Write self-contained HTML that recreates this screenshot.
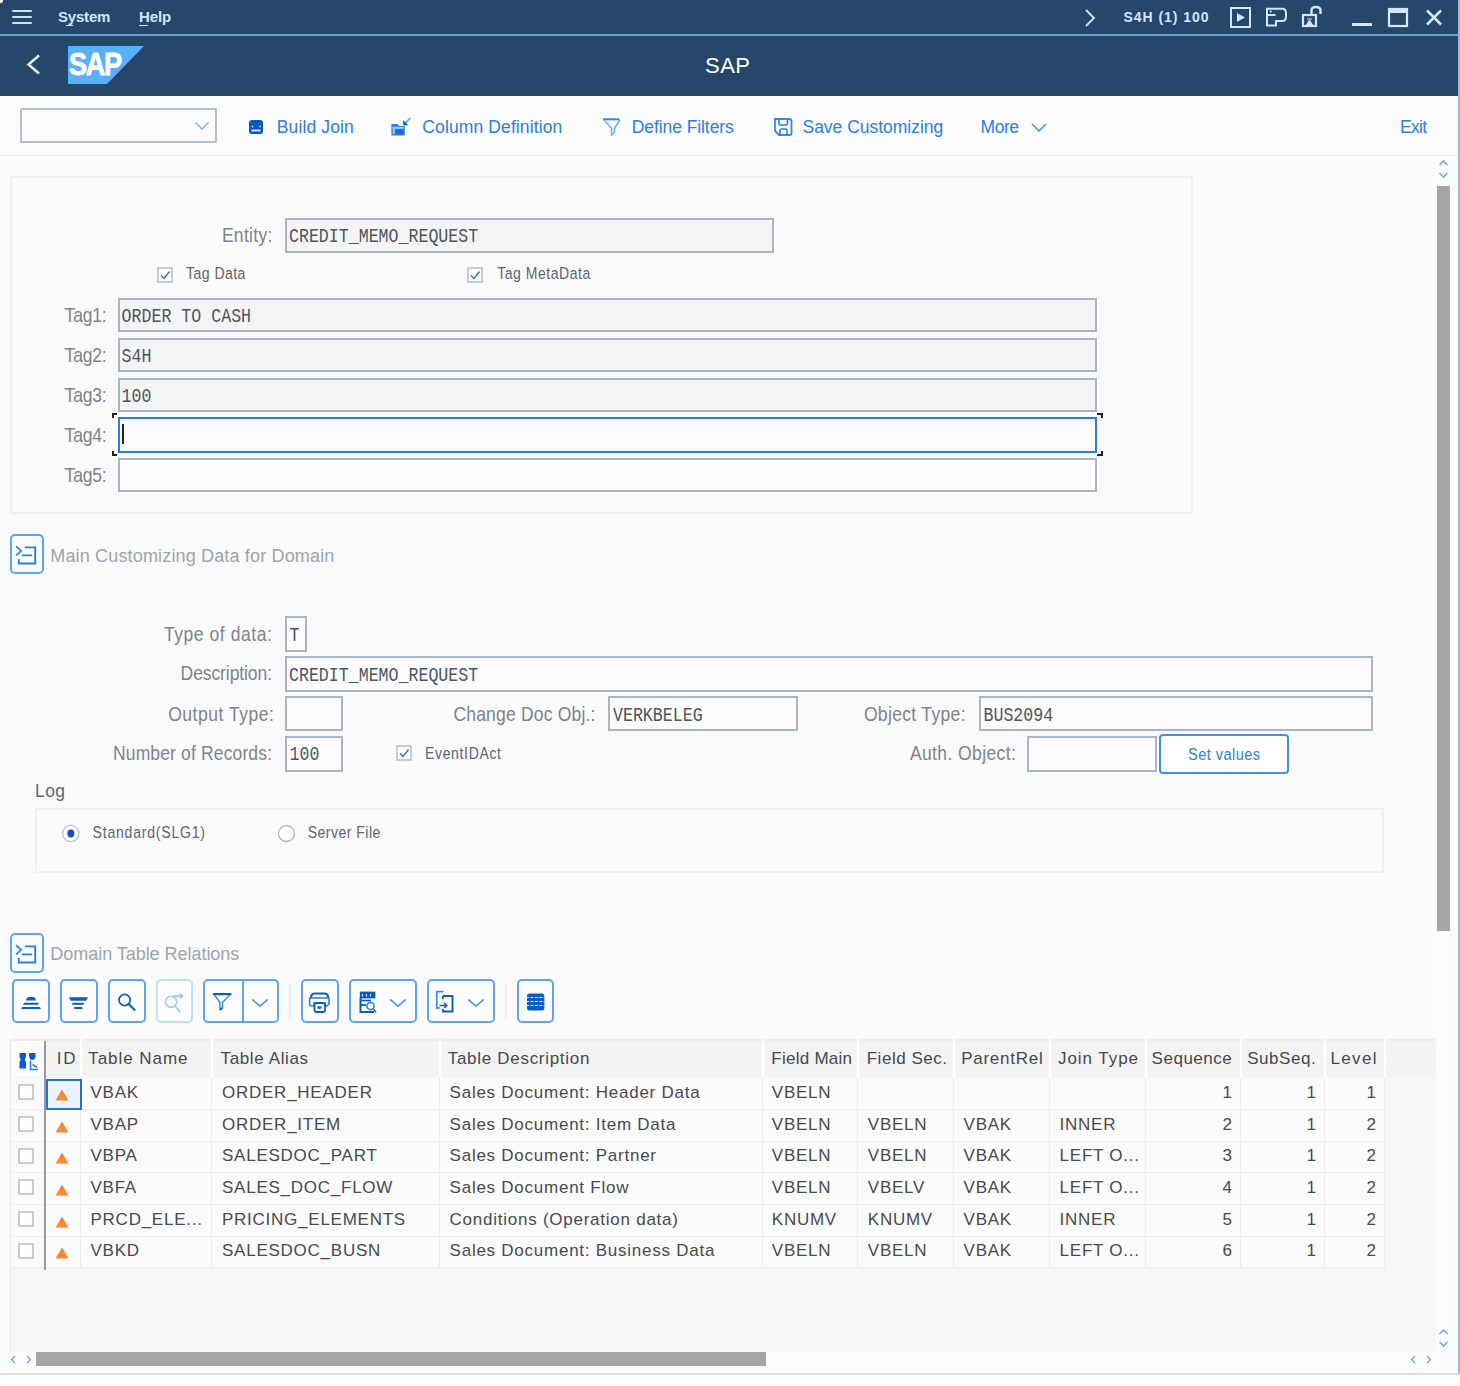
<!DOCTYPE html><html><head><meta charset="utf-8"><style>
html,body{margin:0;padding:0;}
body{width:1460px;height:1386px;position:relative;overflow:hidden;background:#fff;font-family:"Liberation Sans",sans-serif;}
body>div,body>svg{position:absolute;white-space:nowrap;}
</style></head><body>
<div style="left:0px;top:0px;width:1460px;height:96px;background:#25476a;"></div>
<div style="left:0px;top:34px;width:1458px;height:2px;background:#6a9dd6;"></div>
<div style="left:12px;top:10px;width:20px;height:2px;background:#c8e3fe;border-radius:1px;"></div>
<div style="left:12px;top:16px;width:20px;height:2px;background:#c8e3fe;border-radius:1px;"></div>
<div style="left:12px;top:22px;width:20px;height:2px;background:#c8e3fe;border-radius:1px;"></div>
<div style="left:-2px;top:-2px;width:4.5px;height:4.5px;border-radius:50%;background:#ffffff"></div>
<div style="left:58px;top:9.30px;font-size:15px;line-height:15px;color:#d2e6fd;font-family:'Liberation Sans',sans-serif;font-weight:600;letter-spacing:-0.202px;">System</div>
<div style="left:66px;top:25px;width:7px;height:1px;background:#d2e6fd;"></div>
<div style="left:139px;top:9.30px;font-size:15px;line-height:15px;color:#d2e6fd;font-family:'Liberation Sans',sans-serif;font-weight:600;letter-spacing:-0.117px;">Help</div>
<div style="left:139px;top:25px;width:9px;height:1px;background:#d2e6fd;"></div>
<svg style="left:1083px;top:8px" width="14" height="20" viewBox="0 0 14 20"><path d="M3 2 L11 10 L3 18" fill="none" stroke="#d2e6fd" stroke-width="1.8"/></svg>
<div style="left:1123.5px;top:10.15px;font-size:14px;line-height:14px;color:#d2e6fd;font-family:'Liberation Sans',sans-serif;font-weight:600;letter-spacing:0.952px;">S4H (1) 100</div>
<svg style="left:1230px;top:7px" width="22" height="22" viewBox="0 0 22 22"><rect x="1" y="1" width="19" height="19" fill="none" stroke="#d2e6fd" stroke-width="2"/><path d="M7 6 L15 10.5 L7 15Z" fill="#d2e6fd"/></svg>
<svg style="left:1264px;top:6px" width="26" height="23" viewBox="0 0 26 23"><path d="M3 2.8 H18.5 Q22 2.8 22 7.5 V10 Q22 15 18.5 15 H12 V19.5 H3 Z" fill="none" stroke="#d2e6fd" stroke-width="2"/><path d="M3 9 H11.5 M6 6 L7.5 5" fill="none" stroke="#d2e6fd" stroke-width="1.8"/></svg>
<svg style="left:1300px;top:4px" width="25" height="25" viewBox="0 0 25 25"><rect x="3" y="11" width="13" height="11" fill="none" stroke="#d2e6fd" stroke-width="2.2"/><path d="M11.5 11 V6.5 Q11.5 3 16 3 Q20.5 3 20.5 6.5 V10" fill="none" stroke="#d2e6fd" stroke-width="2.4"/><path d="M6.5 21 L9.5 16 L12.5 21 Z M7 15 H12" fill="#d2e6fd" stroke="#d2e6fd" stroke-width="1"/></svg>
<div style="left:1352px;top:23px;width:20px;height:3px;background:#d2e6fd;"></div>
<svg style="left:1387px;top:7px" width="22" height="21" viewBox="0 0 22 21"><rect x="2" y="2" width="18" height="17" fill="none" stroke="#d2e6fd" stroke-width="2.2"/><rect x="2" y="2" width="18" height="4" fill="#d2e6fd"/></svg>
<svg style="left:1425px;top:9px" width="19" height="17" viewBox="0 0 19 17"><path d="M2 1.5 L16 15.5 M16 1.5 L2 15.5" stroke="#d2e6fd" stroke-width="2.5"/></svg>
<svg style="left:25px;top:53px" width="18" height="24" viewBox="0 0 18 24"><path d="M14 2.5 L3.5 11.5 L14 20.5" fill="none" stroke="#eef5ff" stroke-width="2.4"/></svg>
<svg style="left:68px;top:46px" width="77" height="38" viewBox="0 0 77 38"><path d="M0 0 H76 L39 38 H0 Z" fill="#58b0fb"/></svg>
<div style="left:69px;top:48.94px;font-size:31.5px;line-height:31.5px;color:#ffffff;font-family:'Liberation Sans',sans-serif;font-weight:700;letter-spacing:-1.500px;transform:scaleX(0.86);transform-origin:0 0;-webkit-text-stroke:0.8px #ffffff;">SAP</div>
<div style="left:705px;top:55.38px;font-size:22px;line-height:22px;color:#ffffff;font-family:'Liberation Sans',sans-serif;letter-spacing:0.490px;">SAP</div>
<div style="left:1458px;top:0px;width:2px;height:1373px;background:#8fbdee;"></div>
<div style="left:0px;top:96px;width:1458px;height:59px;background:#fbfbfc;"></div>
<div style="left:0px;top:155px;width:1458px;height:1px;background:#ececec;"></div>
<div style="left:20px;top:108px;width:197px;height:35px;background:#fbfbfc;border:2px solid #b3c0cc;box-sizing:border-box;border-radius:1px;"></div>
<svg style="left:194px;top:121px" width="17" height="10" viewBox="0 0 17 10"><path d="M1.5 1.5 L8 8 L14.5 1.5" fill="none" stroke="#7fb2ee" stroke-width="1.5"/></svg>
<svg style="left:248px;top:119px" width="16" height="16" viewBox="0 0 16 16"><rect x="1" y="1" width="14" height="14" rx="3" fill="#0b57b9"/><circle cx="4.5" cy="7.5" r="1" fill="#9cc6ff"/><circle cx="12" cy="7.5" r="1" fill="#9cc6ff"/><rect x="3.5" y="10.5" width="9" height="2" fill="#d4e6ff"/></svg>
<div style="left:276.8px;top:118.99px;font-size:17.5px;line-height:17.5px;color:#2a7fe0;font-family:'Liberation Sans',sans-serif;letter-spacing:0.125px;">Build Join</div>
<svg style="left:386px;top:112px" width="30" height="30" viewBox="0 0 30 30"><path d="M5.4 12 H11.5 L13.5 14 H18.8 V23.4 H5.4 Z" fill="#2a80e0"/><rect x="6.6" y="14.8" width="11" height="2" fill="#a9d2fd"/><rect x="6.6" y="14.8" width="2.2" height="7.3" fill="#8cc2fb"/><rect x="9.5" y="17.5" width="8" height="5" fill="#1b6ad6"/><path d="M24.5 5.8 L19.2 11.2" stroke="#6ab0fa" stroke-width="1.7"/><path d="M17.2 8.3 V13.2 H22.2 Z" fill="#0b57c9"/></svg>
<div style="left:422.3px;top:118.99px;font-size:17.5px;line-height:17.5px;color:#2a7fe0;font-family:'Liberation Sans',sans-serif;letter-spacing:0.117px;">Column Definition</div>
<svg style="left:601px;top:117px" width="20" height="19" viewBox="0 0 20 19"><path d="M2 2.3 H18.5" stroke="#2b85e6" stroke-width="2"/><path d="M3 3 L10.5 11 V18 L13.5 15 V11 L19 3" fill="none" stroke="#6ab0fa" stroke-width="1.6"/></svg>
<div style="left:631.8px;top:118.99px;font-size:17.5px;line-height:17.5px;color:#2a7fe0;font-family:'Liberation Sans',sans-serif;letter-spacing:-0.084px;">Define Filters</div>
<svg style="left:773px;top:117px" width="20" height="20" viewBox="0 0 20 20"><path d="M2 2 H16 Q18.5 2 18.5 4.5 V16.5 Q18.5 18 16.5 18 H6 L2 14 Z" fill="none" stroke="#3388ea" stroke-width="1.8"/><path d="M6 2 V6.5 Q6 8 7.5 8 H13 Q14.5 8 14.5 6.5 V2" fill="none" stroke="#2a7ee0" stroke-width="1.6"/><path d="M7 18 V14 Q7 12 9 12 H12.5 Q14 12 14 14 V18" fill="none" stroke="#2a7ee0" stroke-width="1.6"/></svg>
<div style="left:802.5px;top:118.99px;font-size:17.5px;line-height:17.5px;color:#2a7fe0;font-family:'Liberation Sans',sans-serif;letter-spacing:-0.022px;">Save Customizing</div>
<div style="left:980.5px;top:118.99px;font-size:17.5px;line-height:17.5px;color:#2a7fe0;font-family:'Liberation Sans',sans-serif;letter-spacing:-0.424px;">More</div>
<svg style="left:1030px;top:122px" width="18" height="11" viewBox="0 0 18 11"><path d="M2 2 L9 9 L16 2" fill="none" stroke="#4a98f0" stroke-width="1.6"/></svg>
<div style="left:1400px;top:118.99px;font-size:17.5px;line-height:17.5px;color:#2a7fe0;font-family:'Liberation Sans',sans-serif;letter-spacing:-0.724px;">Exit</div>
<div style="left:0px;top:156px;width:1458px;height:1217px;background:#fafafa;"></div>
<div style="left:0px;top:1373px;width:1460px;height:2px;background:#dedede;"></div>
<div style="left:0px;top:1375px;width:1460px;height:11px;background:#ffffff;"></div>
<div style="left:1436px;top:156px;width:15px;height:1196px;background:#fbfbfb;"></div>
<svg style="left:1438px;top:158px" width="11" height="9" viewBox="0 0 11 9"><path d="M1.5 7 L5.5 3 L9.5 7" fill="none" stroke="#6d9de6" stroke-width="1.25"/></svg>
<svg style="left:1438px;top:171px" width="11" height="9" viewBox="0 0 11 9"><path d="M1.5 2 L5.5 6 L9.5 2" fill="none" stroke="#6d9de6" stroke-width="1.25"/></svg>
<div style="left:1437px;top:186px;width:13px;height:745px;background:#a6a6a6;"></div>
<svg style="left:1438px;top:1327px" width="11" height="9" viewBox="0 0 11 9"><path d="M1.5 7 L5.5 3 L9.5 7" fill="none" stroke="#6d9de6" stroke-width="1.25"/></svg>
<svg style="left:1438px;top:1340px" width="11" height="9" viewBox="0 0 11 9"><path d="M1.5 2 L5.5 6 L9.5 2" fill="none" stroke="#6d9de6" stroke-width="1.25"/></svg>
<div style="left:10px;top:176px;width:1183px;height:338px;border:2px solid #efefef;box-sizing:border-box;"></div>
<div style="left:221.9px;top:228.19px;font-size:17.5px;line-height:17.5px;color:#7b848d;font-family:'Liberation Sans',sans-serif;letter-spacing:0.295px;transform:scaleY(1.15);transform-origin:0 14.81px;">Entity:</div>
<div style="left:285px;top:218px;width:489px;height:35px;background:#f4f4f4;border:2px solid #a8b6c4;box-sizing:border-box;"></div>
<div style="left:289px;top:230.28px;font-size:16.6px;line-height:16.6px;color:#4e555d;font-family:'Liberation Mono',monospace;transform:scaleY(1.17);transform-origin:0 12.72px;">CREDIT_MEMO_REQUEST</div>
<svg style="left:157px;top:267px" width="16" height="16" viewBox="0 0 16 16"><rect x="1" y="1" width="14" height="14" fill="#fcfcfc" stroke="#aab4bf" stroke-width="1.3"/><path d="M4 8.5 L7 11.5 L12.5 4.5" fill="none" stroke="#2f6fd0" stroke-width="1.4"/></svg>
<div style="left:186px;top:267.35px;font-size:14px;line-height:14px;color:#5b6570;font-family:'Liberation Sans',sans-serif;letter-spacing:0.481px;transform:scaleY(1.18);transform-origin:0 11.85px;">Tag Data</div>
<svg style="left:467px;top:267px" width="16" height="16" viewBox="0 0 16 16"><rect x="1" y="1" width="14" height="14" fill="#fcfcfc" stroke="#aab4bf" stroke-width="1.3"/><path d="M4 8.5 L7 11.5 L12.5 4.5" fill="none" stroke="#2f6fd0" stroke-width="1.4"/></svg>
<div style="left:497.2px;top:267.35px;font-size:14px;line-height:14px;color:#5b6570;font-family:'Liberation Sans',sans-serif;letter-spacing:0.531px;transform:scaleY(1.18);transform-origin:0 11.85px;">Tag MetaData</div>
<div style="left:64.6px;top:307.69px;font-size:17.5px;line-height:17.5px;color:#7b848d;font-family:'Liberation Sans',sans-serif;letter-spacing:-0.203px;transform:scaleY(1.15);transform-origin:0 14.81px;">Tag1:</div>
<div style="left:118px;top:298px;width:979px;height:34px;background:#f4f4f4;border:2px solid #a8b6c4;box-sizing:border-box;"></div>
<div style="left:121.6px;top:309.78px;font-size:16.6px;line-height:16.6px;color:#4e555d;font-family:'Liberation Mono',monospace;transform:scaleY(1.17);transform-origin:0 12.72px;">ORDER TO CASH</div>
<div style="left:64.6px;top:347.69px;font-size:17.5px;line-height:17.5px;color:#7b848d;font-family:'Liberation Sans',sans-serif;letter-spacing:-0.203px;transform:scaleY(1.15);transform-origin:0 14.81px;">Tag2:</div>
<div style="left:118px;top:338px;width:979px;height:34px;background:#f4f4f4;border:2px solid #a8b6c4;box-sizing:border-box;"></div>
<div style="left:121.6px;top:349.78px;font-size:16.6px;line-height:16.6px;color:#4e555d;font-family:'Liberation Mono',monospace;transform:scaleY(1.17);transform-origin:0 12.72px;">S4H</div>
<div style="left:64.6px;top:387.69px;font-size:17.5px;line-height:17.5px;color:#7b848d;font-family:'Liberation Sans',sans-serif;letter-spacing:-0.203px;transform:scaleY(1.15);transform-origin:0 14.81px;">Tag3:</div>
<div style="left:118px;top:378px;width:979px;height:34px;background:#f4f4f4;border:2px solid #a8b6c4;box-sizing:border-box;"></div>
<div style="left:121.6px;top:389.78px;font-size:16.6px;line-height:16.6px;color:#4e555d;font-family:'Liberation Mono',monospace;transform:scaleY(1.17);transform-origin:0 12.72px;">100</div>
<div style="left:64.6px;top:427.69px;font-size:17.5px;line-height:17.5px;color:#7b848d;font-family:'Liberation Sans',sans-serif;letter-spacing:-0.203px;transform:scaleY(1.15);transform-origin:0 14.81px;">Tag4:</div>
<div style="left:118px;top:417px;width:979px;height:36px;background:#fbfbfb;border:2px solid #2a7ce8;box-sizing:border-box;"></div>
<div style="left:64.6px;top:467.69px;font-size:17.5px;line-height:17.5px;color:#7b848d;font-family:'Liberation Sans',sans-serif;letter-spacing:-0.203px;transform:scaleY(1.15);transform-origin:0 14.81px;">Tag5:</div>
<div style="left:118px;top:458px;width:979px;height:34px;background:#fbfbfb;border:2px solid #a8b6c4;box-sizing:border-box;"></div>
<div style="left:112px;top:413px;width:5px;height:5px;border-left:2px solid #222;border-top:2px solid #222;box-sizing:border-box"></div>
<div style="left:112px;top:451px;width:5px;height:5px;border-left:2px solid #222;border-bottom:2px solid #222;box-sizing:border-box"></div>
<div style="left:1097px;top:413px;width:6px;height:5px;border-right:2px solid #222;border-top:2px solid #222;box-sizing:border-box"></div>
<div style="left:1097px;top:451px;width:6px;height:5px;border-right:2px solid #222;border-bottom:2px solid #222;box-sizing:border-box"></div>
<div style="left:122px;top:424px;width:2px;height:20px;background:#222;"></div>
<div style="left:10px;top:534px;width:34px;height:40px;border:2px solid #5ea4f2;box-sizing:border-box;border-radius:5px;"></div>
<svg style="left:10px;top:534px" width="34" height="40" viewBox="0 0 34 40"><path d="M6.5 12.8 L11.2 16.8 L6.5 21" fill="none" stroke="#3d8ce8" stroke-width="1.8" stroke-linecap="round"/><path d="M14.8 13.4 H25.2 V29.5 H8.8 V25" fill="none" stroke="#2a7fe0" stroke-width="1.9"/><path d="M12.7 21.4 H21.4" stroke="#2a7fe0" stroke-width="1.9" stroke-linecap="round"/></svg>
<div style="left:50.3px;top:547.46px;font-size:18px;line-height:18px;color:#9aa5b0;font-family:'Liberation Sans',sans-serif;letter-spacing:0.158px;">Main Customizing Data for Domain</div>
<div style="left:163.9px;top:626.79px;font-size:17.5px;line-height:17.5px;color:#7b848d;font-family:'Liberation Sans',sans-serif;letter-spacing:0.568px;transform:scaleY(1.15);transform-origin:0 14.81px;">Type of data:</div>
<div style="left:285px;top:616px;width:22px;height:36px;background:#fbfbfb;border:2px solid #a8b6c4;box-sizing:border-box;"></div>
<div style="left:289.5px;top:628.88px;font-size:16.6px;line-height:16.6px;color:#4e555d;font-family:'Liberation Mono',monospace;transform:scaleY(1.17);transform-origin:0 12.72px;">T</div>
<div style="left:180.6px;top:666.49px;font-size:17.5px;line-height:17.5px;color:#7b848d;font-family:'Liberation Sans',sans-serif;letter-spacing:-0.091px;transform:scaleY(1.15);transform-origin:0 14.81px;">Description:</div>
<div style="left:285px;top:656px;width:1088px;height:36px;background:#fbfbfb;border:2px solid #a8b6c4;box-sizing:border-box;"></div>
<div style="left:289px;top:668.58px;font-size:16.6px;line-height:16.6px;color:#4e555d;font-family:'Liberation Mono',monospace;transform:scaleY(1.17);transform-origin:0 12.72px;">CREDIT_MEMO_REQUEST</div>
<div style="left:168.2px;top:706.79px;font-size:17.5px;line-height:17.5px;color:#7b848d;font-family:'Liberation Sans',sans-serif;letter-spacing:0.538px;transform:scaleY(1.15);transform-origin:0 14.81px;">Output Type:</div>
<div style="left:285px;top:696px;width:58px;height:35px;background:#fbfbfb;border:2px solid #a8b6c4;box-sizing:border-box;"></div>
<div style="left:453.4px;top:706.69px;font-size:17.5px;line-height:17.5px;color:#7b848d;font-family:'Liberation Sans',sans-serif;letter-spacing:0.193px;transform:scaleY(1.15);transform-origin:0 14.81px;">Change Doc Obj.:</div>
<div style="left:608px;top:696px;width:190px;height:35px;background:#fbfbfb;border:2px solid #a8b6c4;box-sizing:border-box;"></div>
<div style="left:613px;top:708.78px;font-size:16.6px;line-height:16.6px;color:#4e555d;font-family:'Liberation Mono',monospace;transform:scaleY(1.17);transform-origin:0 12.72px;">VERKBELEG</div>
<div style="left:863.9px;top:706.69px;font-size:17.5px;line-height:17.5px;color:#7b848d;font-family:'Liberation Sans',sans-serif;letter-spacing:0.334px;transform:scaleY(1.15);transform-origin:0 14.81px;">Object Type:</div>
<div style="left:979px;top:696px;width:394px;height:35px;background:#fbfbfb;border:2px solid #a8b6c4;box-sizing:border-box;"></div>
<div style="left:983.5px;top:708.78px;font-size:16.6px;line-height:16.6px;color:#4e555d;font-family:'Liberation Mono',monospace;transform:scaleY(1.17);transform-origin:0 12.72px;">BUS2094</div>
<div style="left:113px;top:746.19px;font-size:17.5px;line-height:17.5px;color:#7b848d;font-family:'Liberation Sans',sans-serif;letter-spacing:0.142px;transform:scaleY(1.15);transform-origin:0 14.81px;">Number of Records:</div>
<div style="left:285px;top:736px;width:58px;height:36px;background:#fbfbfb;border:2px solid #a8b6c4;box-sizing:border-box;"></div>
<div style="left:289.5px;top:748.28px;font-size:16.6px;line-height:16.6px;color:#4e555d;font-family:'Liberation Mono',monospace;transform:scaleY(1.17);transform-origin:0 12.72px;">100</div>
<svg style="left:396px;top:745px" width="16" height="16" viewBox="0 0 16 16"><rect x="1" y="1" width="14" height="14" fill="#fcfcfc" stroke="#aab4bf" stroke-width="1.3"/><path d="M4 8.5 L7 11.5 L12.5 4.5" fill="none" stroke="#2f6fd0" stroke-width="1.4"/></svg>
<div style="left:425px;top:746.65px;font-size:14px;line-height:14px;color:#5b6570;font-family:'Liberation Sans',sans-serif;letter-spacing:0.664px;transform:scaleY(1.18);transform-origin:0 11.85px;">EventIDAct</div>
<div style="left:909.9px;top:746.19px;font-size:17.5px;line-height:17.5px;color:#7b848d;font-family:'Liberation Sans',sans-serif;letter-spacing:0.403px;transform:scaleY(1.15);transform-origin:0 14.81px;">Auth. Object:</div>
<div style="left:1027px;top:736px;width:130px;height:36px;background:#fbfbfb;border:2px solid #a8b6c4;box-sizing:border-box;"></div>
<div style="left:1159px;top:734px;width:130px;height:40px;background:#ffffff;border:2px solid #3f8ee8;box-sizing:border-box;border-radius:4px;"></div>
<div style="left:1188px;top:747.73px;font-size:14.5px;line-height:14.5px;color:#2a7fe0;font-family:'Liberation Sans',sans-serif;letter-spacing:0.477px;transform:scaleY(1.1);transform-origin:0 12.27px;">Set values</div>
<div style="left:35px;top:783.49px;font-size:17.5px;line-height:17.5px;color:#5e6872;font-family:'Liberation Sans',sans-serif;letter-spacing:0.401px;">Log</div>
<div style="left:35px;top:808px;width:1349px;height:65px;border:2px solid #efefef;box-sizing:border-box;"></div>
<svg style="left:61px;top:824px" width="19" height="19" viewBox="0 0 19 19"><circle cx="9.8" cy="9.4" r="8.2" fill="#fcfcfc" stroke="#b9c3d0" stroke-width="1.3"/><ellipse cx="9.8" cy="9.4" rx="3.5" ry="4" fill="#0b50c0"/></svg>
<div style="left:92.6px;top:826.15px;font-size:14px;line-height:14px;color:#5b6570;font-family:'Liberation Sans',sans-serif;letter-spacing:0.804px;transform:scaleY(1.18);transform-origin:0 11.85px;">Standard(SLG1)</div>
<svg style="left:277px;top:824px" width="19" height="19" viewBox="0 0 19 19"><circle cx="9.5" cy="9.5" r="8" fill="#fcfcfc" stroke="#aab4bf" stroke-width="1.3"/></svg>
<div style="left:307.7px;top:826.15px;font-size:14px;line-height:14px;color:#5b6570;font-family:'Liberation Sans',sans-serif;letter-spacing:0.492px;transform:scaleY(1.18);transform-origin:0 11.85px;">Server File</div>
<div style="left:10px;top:933px;width:34px;height:40px;border:2px solid #5ea4f2;box-sizing:border-box;border-radius:5px;"></div>
<svg style="left:10px;top:933px" width="34" height="40" viewBox="0 0 34 40"><path d="M6.5 12.8 L11.2 16.8 L6.5 21" fill="none" stroke="#3d8ce8" stroke-width="1.8" stroke-linecap="round"/><path d="M14.8 13.4 H25.2 V29.5 H8.8 V25" fill="none" stroke="#2a7fe0" stroke-width="1.9"/><path d="M12.7 21.4 H21.4" stroke="#2a7fe0" stroke-width="1.9" stroke-linecap="round"/></svg>
<div style="left:50.3px;top:945.46px;font-size:18px;line-height:18px;color:#9aa5b0;font-family:'Liberation Sans',sans-serif;letter-spacing:-0.037px;">Domain Table Relations</div>
<div style="left:12px;top:979px;width:38px;height:44px;background:#fcfcfd;border:2px solid #5ea4f2;box-sizing:border-box;border-radius:5px;"></div>
<div style="left:60px;top:979px;width:38px;height:44px;background:#fcfcfd;border:2px solid #5ea4f2;box-sizing:border-box;border-radius:5px;"></div>
<div style="left:108px;top:979px;width:38px;height:44px;background:#fcfcfd;border:2px solid #5ea4f2;box-sizing:border-box;border-radius:5px;"></div>
<div style="left:156px;top:979px;width:37px;height:44px;background:#fcfcfd;border:2px solid #c0dcfb;box-sizing:border-box;border-radius:5px;"></div>
<div style="left:203px;top:979px;width:76px;height:44px;background:#fcfcfd;border:2px solid #5ea4f2;box-sizing:border-box;border-radius:5px;"></div>
<div style="left:241.5px;top:980px;width:2.0px;height:42px;background:#5ea4f2;"></div>
<div style="left:289px;top:984px;width:2px;height:35px;background:#ececec;"></div>
<div style="left:301px;top:979px;width:38px;height:44px;background:#fcfcfd;border:2px solid #5ea4f2;box-sizing:border-box;border-radius:5px;"></div>
<div style="left:349px;top:979px;width:68px;height:44px;background:#fcfcfd;border:2px solid #5ea4f2;box-sizing:border-box;border-radius:5px;"></div>
<div style="left:427px;top:979px;width:68px;height:44px;background:#fcfcfd;border:2px solid #5ea4f2;box-sizing:border-box;border-radius:5px;"></div>
<div style="left:505px;top:984px;width:2px;height:35px;background:#ececec;"></div>
<div style="left:517px;top:979px;width:37px;height:44px;background:#fcfcfd;border:2px solid #5ea4f2;box-sizing:border-box;border-radius:5px;"></div>
<svg style="left:12px;top:979px" width="38" height="44" viewBox="0 0 38 44"><path d="M14 21.5 Q14.5 18 17 18 H21 Q23.5 18 24 21.5 Z" fill="#0b5cc4"/><path d="M12 23.8 H26 L26.8 25.8 H11.2 Z" fill="#0b5cc4"/><path d="M10 28 H28 L28.8 30 H9.2 Z" fill="#0b5cc4"/></svg>
<svg style="left:60px;top:979px" width="38" height="44" viewBox="0 0 38 44"><path d="M9 18.2 H28 L26.2 21.7 H10.8 Z" fill="#0b5cc4"/><rect x="12.3" y="23.8" width="11.5" height="2" fill="#0b5cc4"/><rect x="14.2" y="28" width="8.2" height="2" fill="#0b5cc4"/></svg>
<svg style="left:108px;top:979px" width="38" height="44" viewBox="0 0 38 44"><circle cx="16.6" cy="21" r="5.6" fill="none" stroke="#0b5cc4" stroke-width="1.7"/><path d="M20.6 25 L26.5 30.8" stroke="#0b5cc4" stroke-width="2.2" stroke-linecap="round"/></svg>
<svg style="left:156px;top:979px" width="37" height="44" viewBox="0 0 37 44"><circle cx="15.1" cy="22.8" r="5.6" fill="none" stroke="#9ccaf7" stroke-width="1.6"/><path d="M19 26.8 L23.7 32.5" stroke="#9ccaf7" stroke-width="1.8" stroke-linecap="round"/><path d="M17 17 H26 M24 15 L26.5 17 L24 19" fill="none" stroke="#8cc0f5" stroke-width="1.5"/></svg>
<svg style="left:203px;top:979px" width="40" height="44" viewBox="0 0 40 44"><path d="M10.8 15.2 H27.5" stroke="#0b5cc4" stroke-width="2.2" stroke-linecap="round"/><path d="M11.5 16 L17 23.5 V30.5 L19.5 29 V23.5 L26.8 16" fill="none" stroke="#3f8ae6" stroke-width="1.5"/><circle cx="18" cy="30" r="1.2" fill="#0b5cc4"/></svg>
<svg style="left:243px;top:979px" width="36" height="44" viewBox="0 0 36 44"><path d="M9.1 20.4 L17 27.2 L24.9 20.4" fill="none" stroke="#4d95ea" stroke-width="1.6"/></svg>
<svg style="left:301px;top:979px" width="38" height="44" viewBox="0 0 38 44"><path d="M10 19 Q10 14.5 14 14.5 H23 Q27 14.5 27 18 V19" fill="none" stroke="#0b5cc4" stroke-width="2.2"/><path d="M8.8 19 H28 V25 L26 27 H24 V24 H13 V27 H10.5 Q8.5 27 8.5 25 Z" fill="none" stroke="#2f7fe0" stroke-width="1.6"/><rect x="13.5" y="24" width="10.5" height="9" rx="1.5" fill="none" stroke="#0b5cc4" stroke-width="1.8"/><ellipse cx="18.5" cy="28.6" rx="2.3" ry="1.3" fill="#0b5cc4"/></svg>
<svg style="left:349px;top:979px" width="40" height="44" viewBox="0 0 40 44"><rect x="10.8" y="12.6" width="15.6" height="6.8" fill="#0b5cc4"/><path d="M13.5 15 V17.5 M17.5 15 V17.5 M21.5 15 V17.5" stroke="#cfe3fb" stroke-width="1"/><path d="M11.5 19 V33 H25" fill="none" stroke="#0b5cc4" stroke-width="2"/><path d="M12 21.5 H22" stroke="#0b5cc4" stroke-width="1.6"/><circle cx="21.5" cy="27" r="3.6" fill="none" stroke="#2f7fe0" stroke-width="1.6"/><path d="M11.5 26 H17" stroke="#0b5cc4" stroke-width="1.8"/><path d="M24.5 30 L27 33.5" stroke="#0b5cc4" stroke-width="1.3"/></svg>
<svg style="left:381px;top:979px" width="36" height="44" viewBox="0 0 36 44"><path d="M9.1 20.4 L17 27.2 L24.9 20.4" fill="none" stroke="#4d95ea" stroke-width="1.6"/></svg>
<svg style="left:427px;top:979px" width="40" height="44" viewBox="0 0 40 44"><path d="M16.5 12.7 H9.8 V29 H12.5" fill="none" stroke="#3f8ae6" stroke-width="1.8"/><path d="M16 17 H25.5 V32.5 H16 V30" fill="none" stroke="#0b5cc4" stroke-width="1.9"/><path d="M15.8 17 V20" stroke="#0b5cc4" stroke-width="1.9"/><path d="M12.5 26.5 H19.5 M17.2 24 L19.8 26.5 L17.2 29" fill="none" stroke="#0b5cc4" stroke-width="1.6"/></svg>
<svg style="left:459px;top:979px" width="36" height="44" viewBox="0 0 36 44"><path d="M9.1 20.4 L17 27.2 L24.9 20.4" fill="none" stroke="#4d95ea" stroke-width="1.6"/></svg>
<svg style="left:517px;top:979px" width="37" height="44" viewBox="0 0 37 44"><rect x="10" y="14.5" width="17.4" height="17" rx="2.5" fill="#0b5cc4"/><path d="M9 18.5 H28.5 M9 22.5 H28.5 M9 26.5 H28.5" stroke="#dbe9fb" stroke-width="1.2" stroke-dasharray="3 1.4"/></svg>
<div style="left:11px;top:1038px;width:1425px;height:314px;background:#f6f6f6;"></div>
<div style="left:10px;top:1039px;width:1px;height:313px;background:#e6e6e6;"></div>
<div style="left:11px;top:1039px;width:1424px;height:38px;background:#f3f3f3;"></div>
<div style="left:11px;top:1040px;width:34px;height:37px;background:#fbfbfb;"></div>
<div style="left:11px;top:1039px;width:1424px;height:2px;background:#ececec;"></div>
<div style="left:56.7px;top:1049.61px;font-size:17px;line-height:17px;color:#45494e;font-family:'Liberation Sans',sans-serif;letter-spacing:1.900px;">ID</div>
<div style="left:88.2px;top:1049.61px;font-size:17px;line-height:17px;color:#45494e;font-family:'Liberation Sans',sans-serif;letter-spacing:0.954px;">Table Name</div>
<div style="left:220.5px;top:1049.61px;font-size:17px;line-height:17px;color:#45494e;font-family:'Liberation Sans',sans-serif;letter-spacing:0.633px;">Table Alias</div>
<div style="left:447.7px;top:1049.61px;font-size:17px;line-height:17px;color:#45494e;font-family:'Liberation Sans',sans-serif;letter-spacing:0.706px;">Table Description</div>
<div style="left:771.3px;top:1049.61px;font-size:17px;line-height:17px;color:#45494e;font-family:'Liberation Sans',sans-serif;letter-spacing:0.254px;">Field Main</div>
<div style="left:866.7px;top:1049.61px;font-size:17px;line-height:17px;color:#45494e;font-family:'Liberation Sans',sans-serif;letter-spacing:0.524px;">Field Sec.</div>
<div style="left:961.2px;top:1049.61px;font-size:17px;line-height:17px;color:#45494e;font-family:'Liberation Sans',sans-serif;letter-spacing:0.738px;">ParentRel</div>
<div style="left:1058px;top:1049.61px;font-size:17px;line-height:17px;color:#45494e;font-family:'Liberation Sans',sans-serif;letter-spacing:0.943px;">Join Type</div>
<div style="left:1151.6px;top:1049.61px;font-size:17px;line-height:17px;color:#45494e;font-family:'Liberation Sans',sans-serif;letter-spacing:0.519px;">Sequence</div>
<div style="left:1247.2px;top:1049.61px;font-size:17px;line-height:17px;color:#45494e;font-family:'Liberation Sans',sans-serif;letter-spacing:0.547px;">SubSeq.</div>
<div style="left:1330.4px;top:1049.61px;font-size:17px;line-height:17px;color:#45494e;font-family:'Liberation Sans',sans-serif;letter-spacing:1.390px;">Level</div>
<div style="left:80px;top:1039px;width:2px;height:38px;background:#ffffff;"></div>
<div style="left:211px;top:1039px;width:2px;height:38px;background:#ffffff;"></div>
<div style="left:439px;top:1039px;width:2px;height:38px;background:#ffffff;"></div>
<div style="left:762px;top:1039px;width:2px;height:38px;background:#ffffff;"></div>
<div style="left:857px;top:1039px;width:2px;height:38px;background:#ffffff;"></div>
<div style="left:953px;top:1039px;width:2px;height:38px;background:#ffffff;"></div>
<div style="left:1049px;top:1039px;width:2px;height:38px;background:#ffffff;"></div>
<div style="left:1145px;top:1039px;width:2px;height:38px;background:#ffffff;"></div>
<div style="left:1240px;top:1039px;width:2px;height:38px;background:#ffffff;"></div>
<div style="left:1324px;top:1039px;width:2px;height:38px;background:#ffffff;"></div>
<div style="left:1384px;top:1039px;width:2px;height:38px;background:#ffffff;"></div>
<svg style="left:17px;top:1050px" width="24" height="24" viewBox="0 0 24 24"><path d="M2.5 3 H9 V7 L7.8 9.5 L9 12 V18.5 H2.5 V12 L3.7 9.5 L2.5 7 Z" fill="#0b5cc4"/><path d="M12 3 H18.5 V7 L17 9.8 H13.5 L12 7 Z" fill="#0b5cc4"/><path d="M13.5 10.5 V19.5 H21 M15.5 14.5 L20 17.5" fill="none" stroke="#2f7fe0" stroke-width="1.6"/></svg>
<div style="left:11px;top:1078px;width:1374px;height:32px;background:#fafafa;"></div>
<div style="left:11px;top:1109px;width:1374px;height:1px;background:#ececec;"></div>
<div style="left:80px;top:1078px;width:1px;height:32px;background:#ececec;"></div>
<div style="left:211px;top:1078px;width:1px;height:32px;background:#ececec;"></div>
<div style="left:439px;top:1078px;width:1px;height:32px;background:#ececec;"></div>
<div style="left:762px;top:1078px;width:1px;height:32px;background:#ececec;"></div>
<div style="left:857px;top:1078px;width:1px;height:32px;background:#ececec;"></div>
<div style="left:953px;top:1078px;width:1px;height:32px;background:#ececec;"></div>
<div style="left:1049px;top:1078px;width:1px;height:32px;background:#ececec;"></div>
<div style="left:1145px;top:1078px;width:1px;height:32px;background:#ececec;"></div>
<div style="left:1240px;top:1078px;width:1px;height:32px;background:#ececec;"></div>
<div style="left:1324px;top:1078px;width:1px;height:32px;background:#ececec;"></div>
<div style="left:1384px;top:1078px;width:1px;height:32px;background:#ececec;"></div>
<svg style="left:18px;top:1084px" width="16" height="16" viewBox="0 0 16 16"><rect x="1" y="1" width="14" height="14" fill="#fcfcfc" stroke="#aab4bf" stroke-width="1.3"/></svg>
<svg style="left:54px;top:1088px" width="16" height="14" viewBox="0 0 16 14"><path d="M8 1.5 L14.5 12.5 H1.5 Z" fill="#f58b2e"/></svg>
<div style="left:90.5px;top:1084.11px;font-size:17px;line-height:17px;color:#474b50;font-family:'Liberation Sans',sans-serif;letter-spacing:0.750px;">VBAK</div>
<div style="left:222px;top:1084.11px;font-size:17px;line-height:17px;color:#474b50;font-family:'Liberation Sans',sans-serif;letter-spacing:0.750px;">ORDER_HEADER</div>
<div style="left:449.6px;top:1084.11px;font-size:17px;line-height:17px;color:#474b50;font-family:'Liberation Sans',sans-serif;letter-spacing:0.750px;">Sales Document: Header Data</div>
<div style="left:771.8px;top:1084.11px;font-size:17px;line-height:17px;color:#474b50;font-family:'Liberation Sans',sans-serif;letter-spacing:0.750px;">VBELN</div>
<div style="left:1222px;top:1084.11px;font-size:17px;line-height:17px;color:#474b50;font-family:'Liberation Sans',sans-serif;width:10px;text-align:right;">1</div>
<div style="left:1306px;top:1084.11px;font-size:17px;line-height:17px;color:#474b50;font-family:'Liberation Sans',sans-serif;width:10px;text-align:right;">1</div>
<div style="left:1366px;top:1084.11px;font-size:17px;line-height:17px;color:#474b50;font-family:'Liberation Sans',sans-serif;width:10px;text-align:right;">1</div>
<div style="left:11px;top:1110px;width:1374px;height:32px;background:#fafafa;"></div>
<div style="left:11px;top:1141px;width:1374px;height:1px;background:#ececec;"></div>
<div style="left:80px;top:1110px;width:1px;height:32px;background:#ececec;"></div>
<div style="left:211px;top:1110px;width:1px;height:32px;background:#ececec;"></div>
<div style="left:439px;top:1110px;width:1px;height:32px;background:#ececec;"></div>
<div style="left:762px;top:1110px;width:1px;height:32px;background:#ececec;"></div>
<div style="left:857px;top:1110px;width:1px;height:32px;background:#ececec;"></div>
<div style="left:953px;top:1110px;width:1px;height:32px;background:#ececec;"></div>
<div style="left:1049px;top:1110px;width:1px;height:32px;background:#ececec;"></div>
<div style="left:1145px;top:1110px;width:1px;height:32px;background:#ececec;"></div>
<div style="left:1240px;top:1110px;width:1px;height:32px;background:#ececec;"></div>
<div style="left:1324px;top:1110px;width:1px;height:32px;background:#ececec;"></div>
<div style="left:1384px;top:1110px;width:1px;height:32px;background:#ececec;"></div>
<svg style="left:18px;top:1116px" width="16" height="16" viewBox="0 0 16 16"><rect x="1" y="1" width="14" height="14" fill="#fcfcfc" stroke="#aab4bf" stroke-width="1.3"/></svg>
<svg style="left:54px;top:1120px" width="16" height="14" viewBox="0 0 16 14"><path d="M8 1.5 L14.5 12.5 H1.5 Z" fill="#f58b2e"/></svg>
<div style="left:90.5px;top:1115.76px;font-size:17px;line-height:17px;color:#474b50;font-family:'Liberation Sans',sans-serif;letter-spacing:0.750px;">VBAP</div>
<div style="left:222px;top:1115.76px;font-size:17px;line-height:17px;color:#474b50;font-family:'Liberation Sans',sans-serif;letter-spacing:0.750px;">ORDER_ITEM</div>
<div style="left:449.6px;top:1115.76px;font-size:17px;line-height:17px;color:#474b50;font-family:'Liberation Sans',sans-serif;letter-spacing:0.750px;">Sales Document: Item Data</div>
<div style="left:771.8px;top:1115.76px;font-size:17px;line-height:17px;color:#474b50;font-family:'Liberation Sans',sans-serif;letter-spacing:0.750px;">VBELN</div>
<div style="left:867.8px;top:1115.76px;font-size:17px;line-height:17px;color:#474b50;font-family:'Liberation Sans',sans-serif;letter-spacing:0.750px;">VBELN</div>
<div style="left:963.6px;top:1115.76px;font-size:17px;line-height:17px;color:#474b50;font-family:'Liberation Sans',sans-serif;letter-spacing:0.750px;">VBAK</div>
<div style="left:1059.6px;top:1115.76px;font-size:17px;line-height:17px;color:#474b50;font-family:'Liberation Sans',sans-serif;letter-spacing:0.750px;">INNER</div>
<div style="left:1222px;top:1115.76px;font-size:17px;line-height:17px;color:#474b50;font-family:'Liberation Sans',sans-serif;width:10px;text-align:right;">2</div>
<div style="left:1306px;top:1115.76px;font-size:17px;line-height:17px;color:#474b50;font-family:'Liberation Sans',sans-serif;width:10px;text-align:right;">1</div>
<div style="left:1366px;top:1115.76px;font-size:17px;line-height:17px;color:#474b50;font-family:'Liberation Sans',sans-serif;width:10px;text-align:right;">2</div>
<div style="left:11px;top:1142px;width:1374px;height:31px;background:#fafafa;"></div>
<div style="left:11px;top:1172px;width:1374px;height:1px;background:#ececec;"></div>
<div style="left:80px;top:1142px;width:1px;height:31px;background:#ececec;"></div>
<div style="left:211px;top:1142px;width:1px;height:31px;background:#ececec;"></div>
<div style="left:439px;top:1142px;width:1px;height:31px;background:#ececec;"></div>
<div style="left:762px;top:1142px;width:1px;height:31px;background:#ececec;"></div>
<div style="left:857px;top:1142px;width:1px;height:31px;background:#ececec;"></div>
<div style="left:953px;top:1142px;width:1px;height:31px;background:#ececec;"></div>
<div style="left:1049px;top:1142px;width:1px;height:31px;background:#ececec;"></div>
<div style="left:1145px;top:1142px;width:1px;height:31px;background:#ececec;"></div>
<div style="left:1240px;top:1142px;width:1px;height:31px;background:#ececec;"></div>
<div style="left:1324px;top:1142px;width:1px;height:31px;background:#ececec;"></div>
<div style="left:1384px;top:1142px;width:1px;height:31px;background:#ececec;"></div>
<svg style="left:18px;top:1148px" width="16" height="16" viewBox="0 0 16 16"><rect x="1" y="1" width="14" height="14" fill="#fcfcfc" stroke="#aab4bf" stroke-width="1.3"/></svg>
<svg style="left:54px;top:1151px" width="16" height="14" viewBox="0 0 16 14"><path d="M8 1.5 L14.5 12.5 H1.5 Z" fill="#f58b2e"/></svg>
<div style="left:90.5px;top:1147.41px;font-size:17px;line-height:17px;color:#474b50;font-family:'Liberation Sans',sans-serif;letter-spacing:0.750px;">VBPA</div>
<div style="left:222px;top:1147.41px;font-size:17px;line-height:17px;color:#474b50;font-family:'Liberation Sans',sans-serif;letter-spacing:0.750px;">SALESDOC_PART</div>
<div style="left:449.6px;top:1147.41px;font-size:17px;line-height:17px;color:#474b50;font-family:'Liberation Sans',sans-serif;letter-spacing:0.750px;">Sales Document: Partner</div>
<div style="left:771.8px;top:1147.41px;font-size:17px;line-height:17px;color:#474b50;font-family:'Liberation Sans',sans-serif;letter-spacing:0.750px;">VBELN</div>
<div style="left:867.8px;top:1147.41px;font-size:17px;line-height:17px;color:#474b50;font-family:'Liberation Sans',sans-serif;letter-spacing:0.750px;">VBELN</div>
<div style="left:963.6px;top:1147.41px;font-size:17px;line-height:17px;color:#474b50;font-family:'Liberation Sans',sans-serif;letter-spacing:0.750px;">VBAK</div>
<div style="left:1059.6px;top:1147.41px;font-size:17px;line-height:17px;color:#474b50;font-family:'Liberation Sans',sans-serif;letter-spacing:0.750px;">LEFT O...</div>
<div style="left:1222px;top:1147.41px;font-size:17px;line-height:17px;color:#474b50;font-family:'Liberation Sans',sans-serif;width:10px;text-align:right;">3</div>
<div style="left:1306px;top:1147.41px;font-size:17px;line-height:17px;color:#474b50;font-family:'Liberation Sans',sans-serif;width:10px;text-align:right;">1</div>
<div style="left:1366px;top:1147.41px;font-size:17px;line-height:17px;color:#474b50;font-family:'Liberation Sans',sans-serif;width:10px;text-align:right;">2</div>
<div style="left:11px;top:1173px;width:1374px;height:32px;background:#fafafa;"></div>
<div style="left:11px;top:1204px;width:1374px;height:1px;background:#ececec;"></div>
<div style="left:80px;top:1173px;width:1px;height:32px;background:#ececec;"></div>
<div style="left:211px;top:1173px;width:1px;height:32px;background:#ececec;"></div>
<div style="left:439px;top:1173px;width:1px;height:32px;background:#ececec;"></div>
<div style="left:762px;top:1173px;width:1px;height:32px;background:#ececec;"></div>
<div style="left:857px;top:1173px;width:1px;height:32px;background:#ececec;"></div>
<div style="left:953px;top:1173px;width:1px;height:32px;background:#ececec;"></div>
<div style="left:1049px;top:1173px;width:1px;height:32px;background:#ececec;"></div>
<div style="left:1145px;top:1173px;width:1px;height:32px;background:#ececec;"></div>
<div style="left:1240px;top:1173px;width:1px;height:32px;background:#ececec;"></div>
<div style="left:1324px;top:1173px;width:1px;height:32px;background:#ececec;"></div>
<div style="left:1384px;top:1173px;width:1px;height:32px;background:#ececec;"></div>
<svg style="left:18px;top:1179px" width="16" height="16" viewBox="0 0 16 16"><rect x="1" y="1" width="14" height="14" fill="#fcfcfc" stroke="#aab4bf" stroke-width="1.3"/></svg>
<svg style="left:54px;top:1183px" width="16" height="14" viewBox="0 0 16 14"><path d="M8 1.5 L14.5 12.5 H1.5 Z" fill="#f58b2e"/></svg>
<div style="left:90.5px;top:1179.06px;font-size:17px;line-height:17px;color:#474b50;font-family:'Liberation Sans',sans-serif;letter-spacing:0.750px;">VBFA</div>
<div style="left:222px;top:1179.06px;font-size:17px;line-height:17px;color:#474b50;font-family:'Liberation Sans',sans-serif;letter-spacing:0.750px;">SALES_DOC_FLOW</div>
<div style="left:449.6px;top:1179.06px;font-size:17px;line-height:17px;color:#474b50;font-family:'Liberation Sans',sans-serif;letter-spacing:0.750px;">Sales Document Flow</div>
<div style="left:771.8px;top:1179.06px;font-size:17px;line-height:17px;color:#474b50;font-family:'Liberation Sans',sans-serif;letter-spacing:0.750px;">VBELN</div>
<div style="left:867.8px;top:1179.06px;font-size:17px;line-height:17px;color:#474b50;font-family:'Liberation Sans',sans-serif;letter-spacing:0.750px;">VBELV</div>
<div style="left:963.6px;top:1179.06px;font-size:17px;line-height:17px;color:#474b50;font-family:'Liberation Sans',sans-serif;letter-spacing:0.750px;">VBAK</div>
<div style="left:1059.6px;top:1179.06px;font-size:17px;line-height:17px;color:#474b50;font-family:'Liberation Sans',sans-serif;letter-spacing:0.750px;">LEFT O...</div>
<div style="left:1222px;top:1179.06px;font-size:17px;line-height:17px;color:#474b50;font-family:'Liberation Sans',sans-serif;width:10px;text-align:right;">4</div>
<div style="left:1306px;top:1179.06px;font-size:17px;line-height:17px;color:#474b50;font-family:'Liberation Sans',sans-serif;width:10px;text-align:right;">1</div>
<div style="left:1366px;top:1179.06px;font-size:17px;line-height:17px;color:#474b50;font-family:'Liberation Sans',sans-serif;width:10px;text-align:right;">2</div>
<div style="left:11px;top:1205px;width:1374px;height:32px;background:#fafafa;"></div>
<div style="left:11px;top:1236px;width:1374px;height:1px;background:#ececec;"></div>
<div style="left:80px;top:1205px;width:1px;height:32px;background:#ececec;"></div>
<div style="left:211px;top:1205px;width:1px;height:32px;background:#ececec;"></div>
<div style="left:439px;top:1205px;width:1px;height:32px;background:#ececec;"></div>
<div style="left:762px;top:1205px;width:1px;height:32px;background:#ececec;"></div>
<div style="left:857px;top:1205px;width:1px;height:32px;background:#ececec;"></div>
<div style="left:953px;top:1205px;width:1px;height:32px;background:#ececec;"></div>
<div style="left:1049px;top:1205px;width:1px;height:32px;background:#ececec;"></div>
<div style="left:1145px;top:1205px;width:1px;height:32px;background:#ececec;"></div>
<div style="left:1240px;top:1205px;width:1px;height:32px;background:#ececec;"></div>
<div style="left:1324px;top:1205px;width:1px;height:32px;background:#ececec;"></div>
<div style="left:1384px;top:1205px;width:1px;height:32px;background:#ececec;"></div>
<svg style="left:18px;top:1211px" width="16" height="16" viewBox="0 0 16 16"><rect x="1" y="1" width="14" height="14" fill="#fcfcfc" stroke="#aab4bf" stroke-width="1.3"/></svg>
<svg style="left:54px;top:1215px" width="16" height="14" viewBox="0 0 16 14"><path d="M8 1.5 L14.5 12.5 H1.5 Z" fill="#f58b2e"/></svg>
<div style="left:90.5px;top:1210.71px;font-size:17px;line-height:17px;color:#474b50;font-family:'Liberation Sans',sans-serif;letter-spacing:0.750px;">PRCD_ELE...</div>
<div style="left:222px;top:1210.71px;font-size:17px;line-height:17px;color:#474b50;font-family:'Liberation Sans',sans-serif;letter-spacing:0.750px;">PRICING_ELEMENTS</div>
<div style="left:449.6px;top:1210.71px;font-size:17px;line-height:17px;color:#474b50;font-family:'Liberation Sans',sans-serif;letter-spacing:0.750px;">Conditions (Operation data)</div>
<div style="left:771.8px;top:1210.71px;font-size:17px;line-height:17px;color:#474b50;font-family:'Liberation Sans',sans-serif;letter-spacing:0.750px;">KNUMV</div>
<div style="left:867.8px;top:1210.71px;font-size:17px;line-height:17px;color:#474b50;font-family:'Liberation Sans',sans-serif;letter-spacing:0.750px;">KNUMV</div>
<div style="left:963.6px;top:1210.71px;font-size:17px;line-height:17px;color:#474b50;font-family:'Liberation Sans',sans-serif;letter-spacing:0.750px;">VBAK</div>
<div style="left:1059.6px;top:1210.71px;font-size:17px;line-height:17px;color:#474b50;font-family:'Liberation Sans',sans-serif;letter-spacing:0.750px;">INNER</div>
<div style="left:1222px;top:1210.71px;font-size:17px;line-height:17px;color:#474b50;font-family:'Liberation Sans',sans-serif;width:10px;text-align:right;">5</div>
<div style="left:1306px;top:1210.71px;font-size:17px;line-height:17px;color:#474b50;font-family:'Liberation Sans',sans-serif;width:10px;text-align:right;">1</div>
<div style="left:1366px;top:1210.71px;font-size:17px;line-height:17px;color:#474b50;font-family:'Liberation Sans',sans-serif;width:10px;text-align:right;">2</div>
<div style="left:11px;top:1237px;width:1374px;height:31px;background:#fafafa;"></div>
<div style="left:11px;top:1267px;width:1374px;height:1px;background:#ececec;"></div>
<div style="left:80px;top:1237px;width:1px;height:31px;background:#ececec;"></div>
<div style="left:211px;top:1237px;width:1px;height:31px;background:#ececec;"></div>
<div style="left:439px;top:1237px;width:1px;height:31px;background:#ececec;"></div>
<div style="left:762px;top:1237px;width:1px;height:31px;background:#ececec;"></div>
<div style="left:857px;top:1237px;width:1px;height:31px;background:#ececec;"></div>
<div style="left:953px;top:1237px;width:1px;height:31px;background:#ececec;"></div>
<div style="left:1049px;top:1237px;width:1px;height:31px;background:#ececec;"></div>
<div style="left:1145px;top:1237px;width:1px;height:31px;background:#ececec;"></div>
<div style="left:1240px;top:1237px;width:1px;height:31px;background:#ececec;"></div>
<div style="left:1324px;top:1237px;width:1px;height:31px;background:#ececec;"></div>
<div style="left:1384px;top:1237px;width:1px;height:31px;background:#ececec;"></div>
<svg style="left:18px;top:1243px" width="16" height="16" viewBox="0 0 16 16"><rect x="1" y="1" width="14" height="14" fill="#fcfcfc" stroke="#aab4bf" stroke-width="1.3"/></svg>
<svg style="left:54px;top:1246px" width="16" height="14" viewBox="0 0 16 14"><path d="M8 1.5 L14.5 12.5 H1.5 Z" fill="#f58b2e"/></svg>
<div style="left:90.5px;top:1242.36px;font-size:17px;line-height:17px;color:#474b50;font-family:'Liberation Sans',sans-serif;letter-spacing:0.750px;">VBKD</div>
<div style="left:222px;top:1242.36px;font-size:17px;line-height:17px;color:#474b50;font-family:'Liberation Sans',sans-serif;letter-spacing:0.750px;">SALESDOC_BUSN</div>
<div style="left:449.6px;top:1242.36px;font-size:17px;line-height:17px;color:#474b50;font-family:'Liberation Sans',sans-serif;letter-spacing:0.750px;">Sales Document: Business Data</div>
<div style="left:771.8px;top:1242.36px;font-size:17px;line-height:17px;color:#474b50;font-family:'Liberation Sans',sans-serif;letter-spacing:0.750px;">VBELN</div>
<div style="left:867.8px;top:1242.36px;font-size:17px;line-height:17px;color:#474b50;font-family:'Liberation Sans',sans-serif;letter-spacing:0.750px;">VBELN</div>
<div style="left:963.6px;top:1242.36px;font-size:17px;line-height:17px;color:#474b50;font-family:'Liberation Sans',sans-serif;letter-spacing:0.750px;">VBAK</div>
<div style="left:1059.6px;top:1242.36px;font-size:17px;line-height:17px;color:#474b50;font-family:'Liberation Sans',sans-serif;letter-spacing:0.750px;">LEFT O...</div>
<div style="left:1222px;top:1242.36px;font-size:17px;line-height:17px;color:#474b50;font-family:'Liberation Sans',sans-serif;width:10px;text-align:right;">6</div>
<div style="left:1306px;top:1242.36px;font-size:17px;line-height:17px;color:#474b50;font-family:'Liberation Sans',sans-serif;width:10px;text-align:right;">1</div>
<div style="left:1366px;top:1242.36px;font-size:17px;line-height:17px;color:#474b50;font-family:'Liberation Sans',sans-serif;width:10px;text-align:right;">2</div>
<div style="left:46px;top:1079px;width:36px;height:31px;background:#eaf3fd;border:2px solid #2a72d0;box-sizing:border-box;"></div>
<svg style="left:54px;top:1088px" width="16" height="14" viewBox="0 0 16 14"><path d="M8 1.5 L14.5 12.5 H1.5 Z" fill="#f58b2e"/></svg>
<div style="left:44px;top:1041px;width:2px;height:229px;background:#9a9a9a;"></div>
<div style="left:10px;top:1352px;width:1426px;height:14px;background:#fbfbfb;"></div>
<svg style="left:8px;top:1354px" width="26" height="11" viewBox="0 0 26 11"><path d="M7 2 L3.5 5.5 L7 9 M19 2 L22.5 5.5 L19 9" fill="none" stroke="#6d9de6" stroke-width="1.25"/></svg>
<div style="left:36px;top:1352px;width:730px;height:14px;background:#a6a6a6;"></div>
<svg style="left:1408px;top:1354px" width="26" height="11" viewBox="0 0 26 11"><path d="M7 2 L3.5 5.5 L7 9 M19 2 L22.5 5.5 L19 9" fill="none" stroke="#6d9de6" stroke-width="1.25"/></svg>
</body></html>
